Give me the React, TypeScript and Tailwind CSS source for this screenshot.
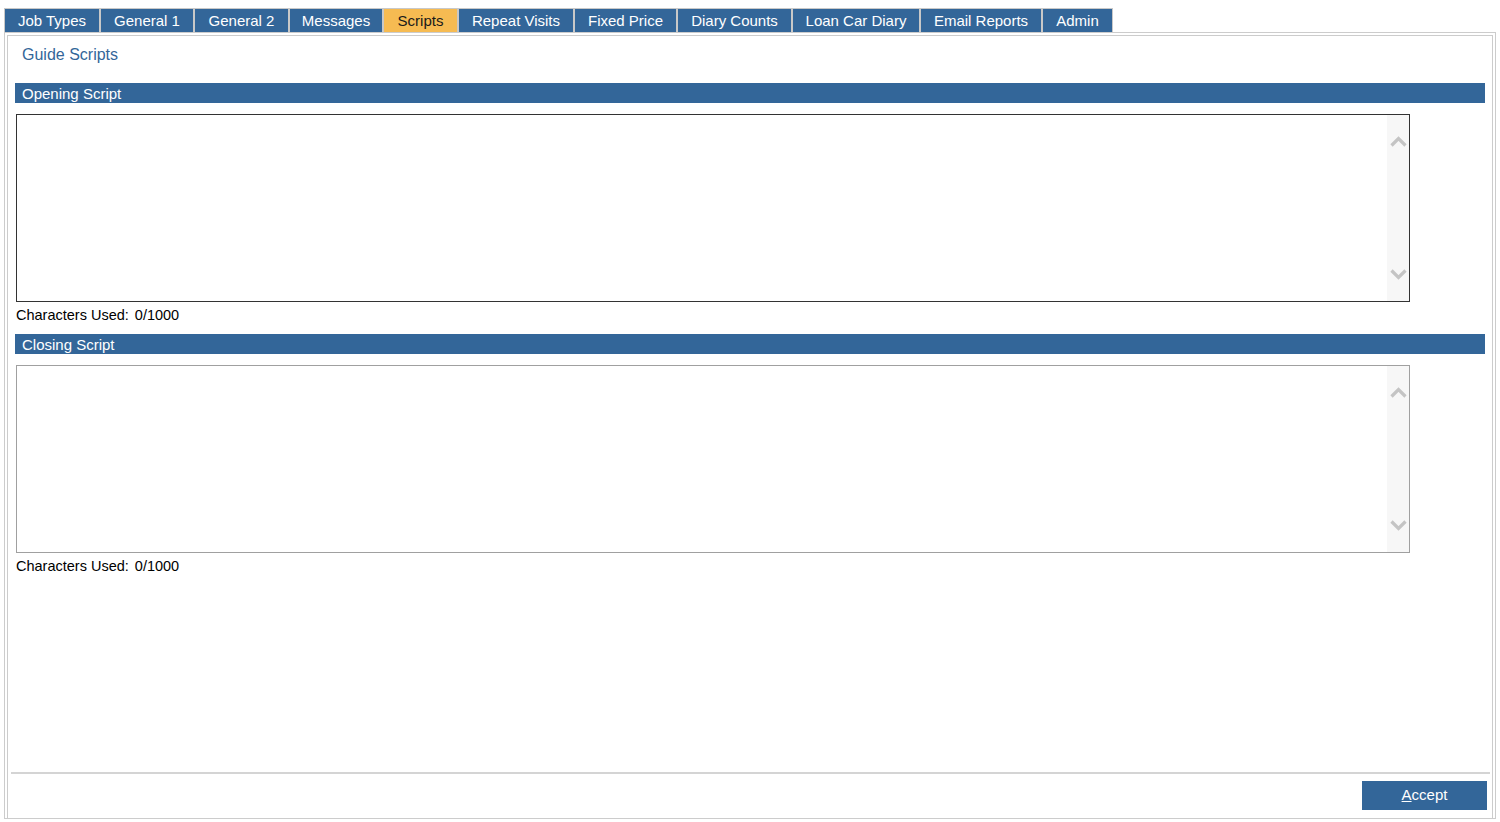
const tabs = [
  { label: "Job Types", w: "w-[96px]" },
  { label: "General 1", w: "w-[94px]" },
  { label: "General 2", w: "w-[95px]" },
  { label: "Messages", w: "w-[94px]" },
  { label: "Scripts", w: "w-[75px]", active: true },
  { label: "Repeat Visits", w: "w-[116px]" },
  { label: "Fixed Price", w: "w-[103px]" },
  { label: "Diary Counts", w: "w-[115px]" },
  { label: "Loan Car Diary", w: "w-[128px]" },
  { label: "Email Reports", w: "w-[122px]" },
  { label: "Admin", w: "w-[71px]" },
];

function Chevron({ down }: { down?: boolean }) {
  return (
    <svg width="17" height="11" viewBox="0 0 17 11" className={down ? "rotate-180" : ""}>
      <polyline points="1.5,9.5 8.5,2.5 15.5,9.5" fill="none" stroke="#c4c4c4" strokeWidth="3.2" />
    </svg>
  );
}

function ScriptBox({ title, focused }: { title: string; focused?: boolean }) {
  return (
    <>
      <div className="ml-[7px] mr-[7px] h-[20px] bg-[#336699] pl-[7px] text-[15px] leading-[21px] text-white">
        {title}
      </div>
      <div
        className={
          "mt-[11px] ml-[8px] flex h-[188px] w-[1394px] border " +
          (focused ? "border-[#333333]" : "border-[#a0a0a0]")
        }
      >
        <textarea className="flex-1 resize-none bg-white outline-none" />
        <div className="flex w-[22px] flex-col items-center justify-between bg-[#f7f7f7] py-[21px]">
          <Chevron />
          <Chevron down />
        </div>
      </div>
      <div className="h-[32px] pl-[8px] pt-[3px] text-[14.5px] leading-[20px] text-black">
        <span>Characters Used:</span>
        <span className="ml-[6px]">0/1000</span>
      </div>
    </>
  );
}

export default function App() {
  return (
    <div className="h-[822px] w-[1500px] overflow-hidden bg-white font-['Liberation_Sans',Arial,sans-serif]">
      <div className="flex pl-[4px] pt-[8px]">
        {tabs.map((t) => (
          <div
            key={t.label}
            className={
              "flex h-[24px] items-center justify-center border-x border-t border-[#c8c8c8] pt-[1px] text-[15px] " +
              t.w +
              (t.active ? " bg-[#f6bb52] text-[#1a1a1a]" : " bg-[#336699] text-white")
            }
          >
            {t.label}
          </div>
        ))}
      </div>
      <div className="ml-[4px] h-[787px] w-[1492px] border border-[#cccccc] pl-[2px] pr-[2px] pt-[2px]">
        <div className="flex h-[783px] flex-col border-x border-t border-[#cccccc]">
          <div className="h-[47px] pl-[14px] pt-[8px] text-[16px] leading-[21px] text-[#336699]">
            Guide Scripts
          </div>
          <ScriptBox title="Opening Script" focused />
          <ScriptBox title="Closing Script" />
          <div className="flex-1" />
          <div className="ml-[3px] mr-[2px] h-[2px] bg-[#d4d4d4]" />
          <div className="flex justify-end pr-[5px] pt-[7px] pb-[8px]">
            <button className="h-[29px] w-[125px] bg-[#336699] text-[15px] text-white">
              <span className="underline">A</span>ccept
            </button>
          </div>
        </div>
      </div>
    </div>
  );
}
